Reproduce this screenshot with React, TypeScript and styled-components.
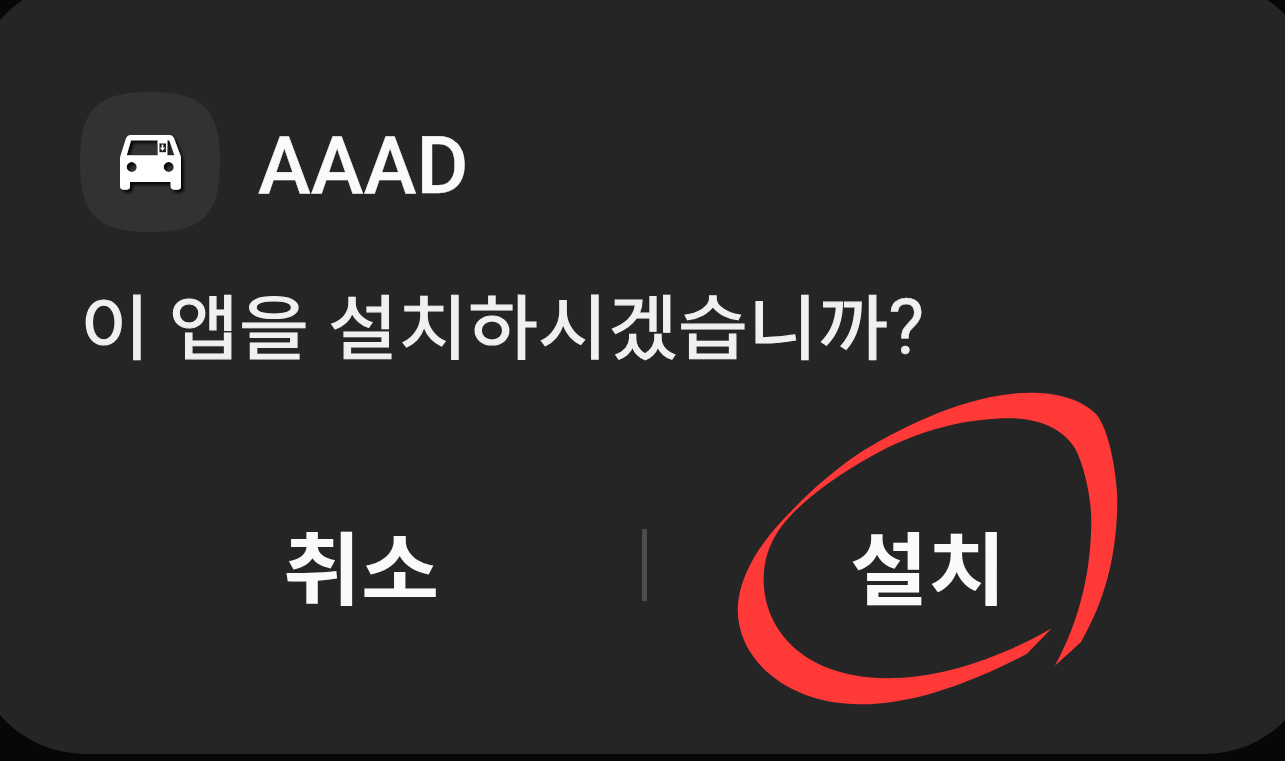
import styled, { createGlobalStyle } from "styled-components";

const GlobalStyle = createGlobalStyle`
  body {
    margin: 0;
    background-color: #070707;
    overflow: hidden;
  }
`;

const Screen = styled.div`
  height: 761px;
  width: 1285px;
  overflow: hidden;
  font-family: Roboto, "Noto Sans CJK KR", sans-serif;
`;

const Dialog = styled.div`
  box-sizing: border-box;
  display: flex;
  flex-direction: column;
  width: 1344px;
  height: 773px;
  margin: -19px 0 0 -27px;
  padding: 111px 108px 0 107px;
  border-radius: 112px;
  background-color: #252525;
`;

const Header = styled.div`
  display: flex;
  flex-direction: row;
  align-items: center;
  gap: 37px;
  height: 140px;
`;

const AppIcon = styled.svg`
  display: block;
  width: 141px;
  height: 141px;
  flex-shrink: 0;
`;

const AppName = styled.h1`
  margin: 7px 0 0 0;
  color: #fafafa;
  font-size: 79.5px;
  font-weight: 500;
  line-height: 94px;
  letter-spacing: 0.1px;
  -webkit-text-stroke: 0.4px currentColor;
`;

const Question = styled.p`
  display: flex;
  margin: 37px 0 0 0;
  height: 110px;
  color: #f0f0f2;
  font-size: 76px;
  font-weight: 400;
  line-height: 110px;
  letter-spacing: 0.1px;
  white-space: nowrap;
`;

// the hangul glyphs are a little flatter than the latin ones
const Hangul = styled.span<{ $shift: number; $stroke?: number }>`
  display: inline-block;
  transform: translateY(${(p) => p.$shift}px) scaleY(0.93);
  -webkit-text-stroke: ${(p) => p.$stroke || 0}px currentColor;
`;

const QuestionMark = styled.span`
  padding: 3px 0 0 0;
  -webkit-text-stroke: 0.5px currentColor;
`;

const Actions = styled.div`
  display: flex;
  flex-direction: row;
  align-items: center;
  justify-content: space-between;
  height: 110px;
  margin-top: 131px;
`;

const ActionButton = styled.button`
  position: relative;
  width: 562px;
  height: 110px;
  padding: 0;
  border: none;
  background: none;
  color: #fafafa;
  font-family: inherit;
  font-size: 85px;
  font-weight: 700;
  line-height: 110px;
  cursor: pointer;
`;

const Divider = styled.div`
  width: 5px;
  height: 72px;
  background-color: #4d4d4d;
`;

const Marker = styled.svg`
  position: absolute;
  left: 89px;
  top: -119px;
  width: 384px;
  height: 316px;
  pointer-events: none;
`;

const CarIcon = () => (
  <AppIcon viewBox="0 0 141 141">
    <defs>
      <filter id="shadow" x="-20%" y="-20%" width="150%" height="150%">
        <feDropShadow dx="8" dy="9" stdDeviation="4.5" floodColor="#000" floodOpacity="0.85" />
      </filter>
    </defs>
    <path
      d="M0 70C0 17 17 0 70 0S140 17 140 70S123 140 70 140S0 123 0 70Z"
      fill="#323234"
    />
    <g transform="translate(30 33) scale(0.33333)" filter="url(#shadow)">
      <path
        fill="#fff"
        fillRule="evenodd"
        d="M62 30H178Q188 30 192 40L212 94Q213 98 213 104V184Q213 194 203 194H192Q182 194 182 184V171H60V184Q60 194 50 194H40Q30 194 30 184V104Q30 98 31 94L48 40Q52 30 62 30ZM63 46L50 91H143V46ZM172 46V91H193L178 46ZM148 55V82H168V55ZM65 111A15 15 0 1 0 65 141A15 15 0 1 0 65 111ZM176 111A15 15 0 1 0 176 141A15 15 0 1 0 176 111Z"
      />
      <path fill="#fff" d="M155.500 59H159.500V68H165L157.500 77L150.500 68H155.500Z" />
    </g>
  </AppIcon>
);

const InstallMarker = () => (
  <Marker viewBox="736 391 384 316">
    <path
      fill="#ff3838"
      d="M1055 665.700L1081 642C1105 600 1117.500 555 1117.300 497C1116 470 1109 429 1096 414C1080 398 1055 392.700 1030 392.700C975 392.700 912 421 863 450.700C838 467 812 489 791.700 510.700C762 540 738 575 737.700 610C738 662 790 704.300 860 704.300C913 704.300 968 684 1026.700 654L1051.700 628.300C1000 658 942 678.300 886.700 678.300C798 677 763.700 625 763.700 580C763.700 553 774 532 795 511C821 486 852 466 886.700 448C930 427 972 418.300 1010 418.300C1036 418.300 1062 427 1075 448.300C1085 467 1091.300 500 1091.300 520C1091.300 570 1080 620 1055 665.700Z"
    />
  </Marker>
);

const App = () => (
  <Screen>
    <GlobalStyle />
    <Dialog>
      <Header>
        <CarIcon />
        <AppName>AAAD</AppName>
      </Header>
      <Question>
        <Hangul $shift={5.8} $stroke={1.3}>이 앱을 설치하시겠습니까</Hangul>
        <QuestionMark>?</QuestionMark>
      </Question>
      <Actions>
        <ActionButton>
          <Hangul $shift={7}>취소</Hangul>
        </ActionButton>
        <Divider />
        <ActionButton>
          <Hangul $shift={7}>설치</Hangul>
          <InstallMarker />
        </ActionButton>
      </Actions>
    </Dialog>
  </Screen>
);

export default App;
